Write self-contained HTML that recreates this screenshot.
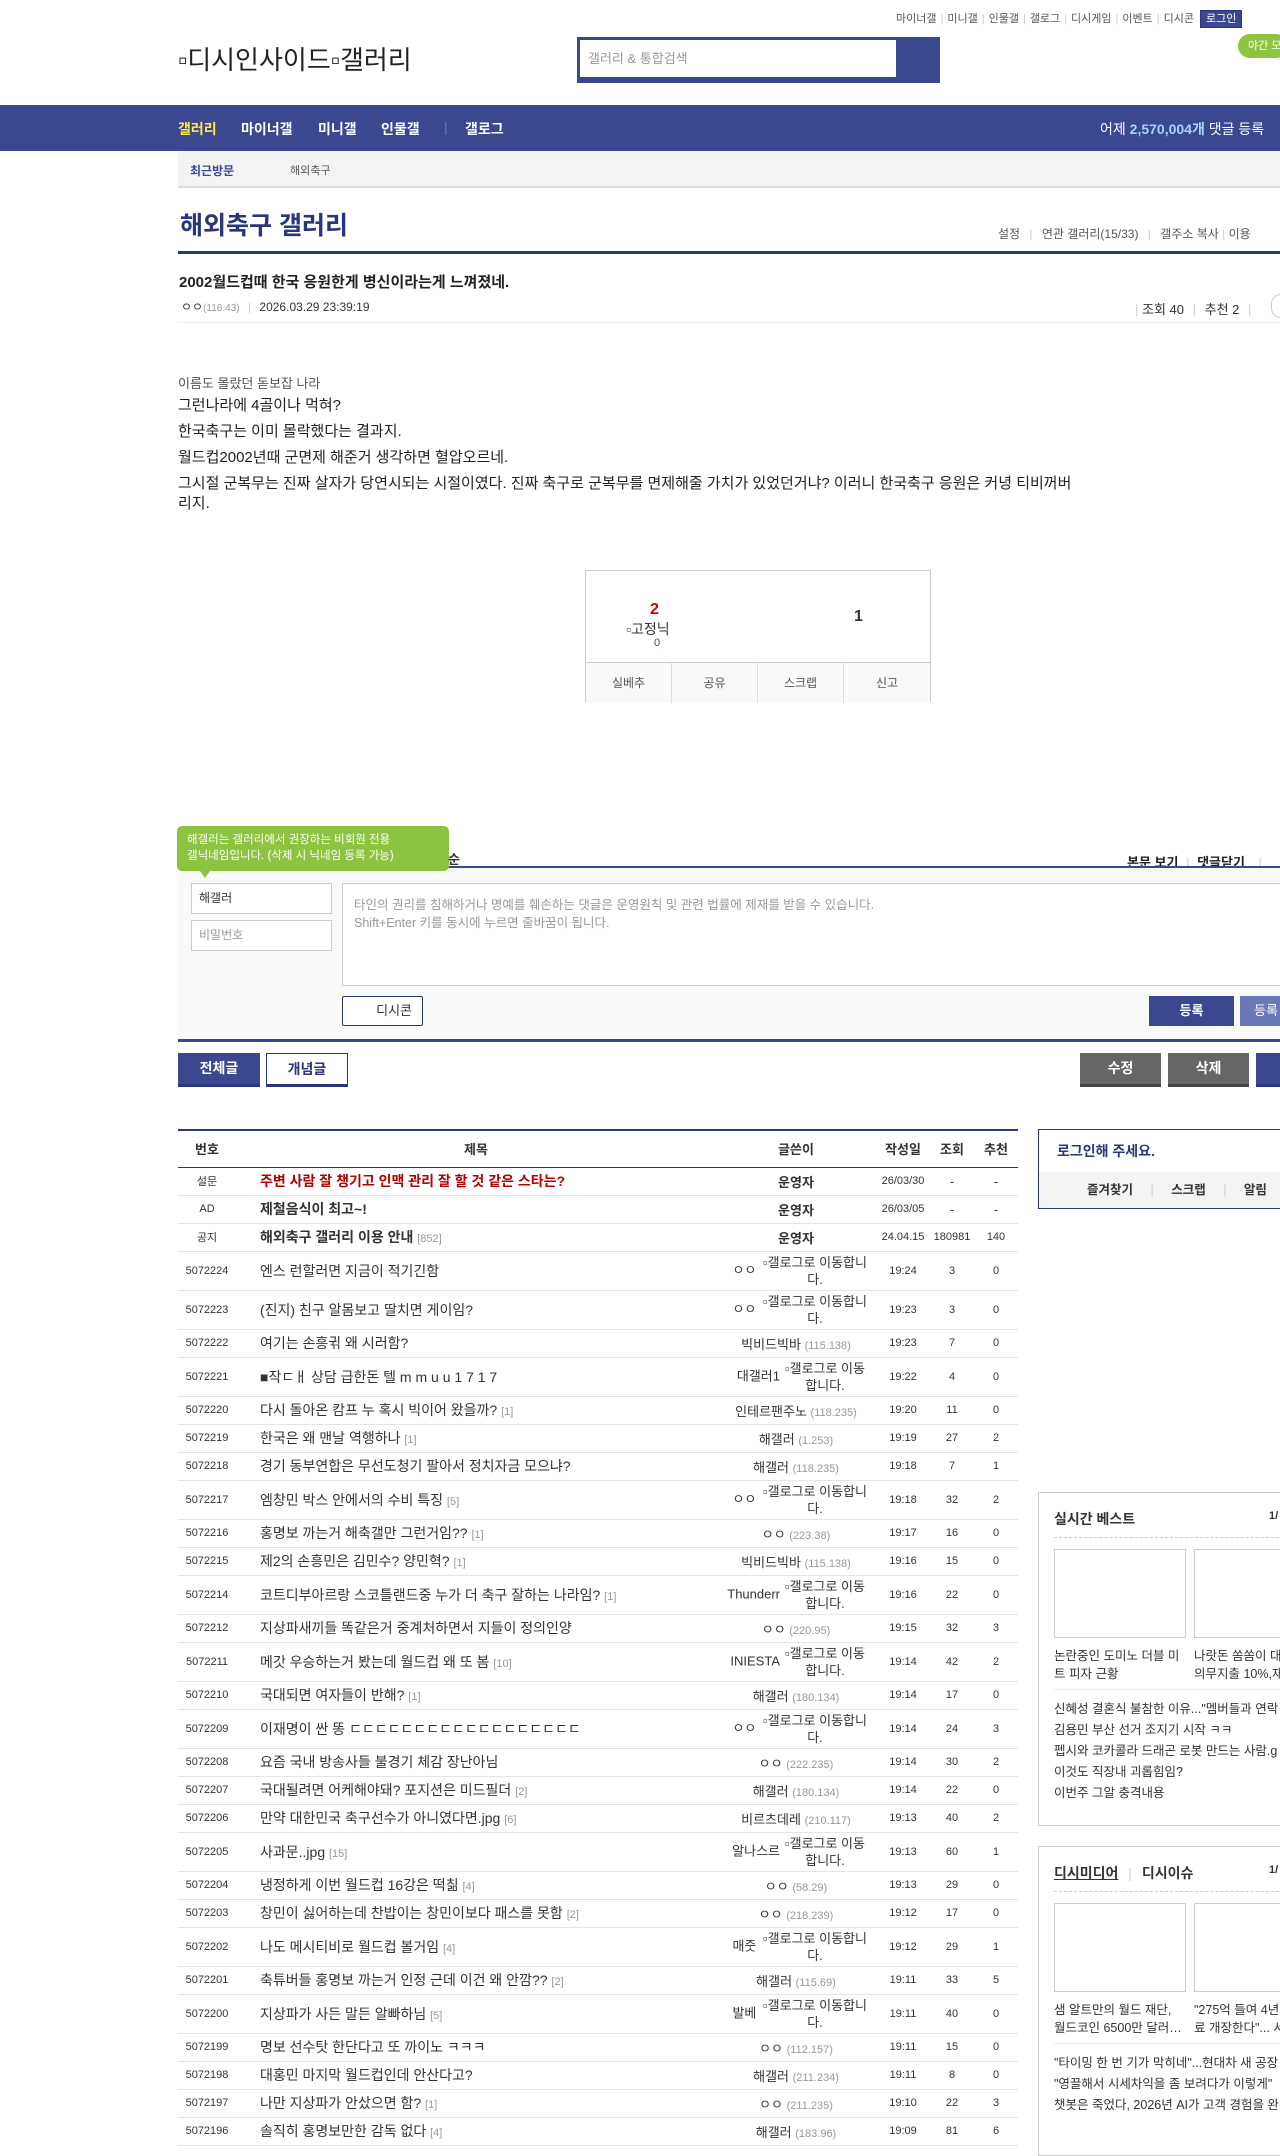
<!DOCTYPE html>
<html><head><meta charset="utf-8">
<style>
*{margin:0;padding:0;box-sizing:border-box}
body{width:1280px;height:2138px;overflow:hidden;background:#fff;font-family:"Liberation Sans","Noto Sans CJK KR",sans-serif;font-size:12px;color:#333;position:relative}
.a{position:absolute}
a{color:inherit;text-decoration:none}
.toplinks{top:10px;left:896px;font-size:11px;color:#555;white-space:nowrap}
.toplinks span.sep{color:#ccc;margin:0 4px}
.login{background:#3b4890;color:#fff;padding:2px 5px;border:1px solid #29367a;margin-left:6px}
.nav{top:105px;left:0;width:1280px;height:46px;background:#3b4890}
.nav .m{position:absolute;top:14px;font-size:14px;font-weight:bold;color:#fff}
.sub{top:151px;left:178px;width:1102px;height:37px;background:#f3f3f3;border-bottom:2px solid #ddd}
table{border-collapse:collapse}
.lst{position:absolute;top:1129px;left:178px;width:840px;border-top:2px solid #29367a;font-size:13px}
.lst td,.lst th{border-bottom:1px solid #e5e5e5;text-align:center;padding:0;color:#333}
.lst th{height:37px;font-weight:bold;border-bottom:1px solid #29367a;font-size:13px}
.lst td{height:28px}
.lst tr.d td{height:39px}
.lst td.t{text-align:left;padding-left:24px;font-size:14px}
.lst td.n{font-size:11px}
.lst .ip{color:#999;font-size:11px}
.lst .c{color:#999;font-size:11px}
.im{display:inline-block;width:110px;line-height:17px;text-align:center;vertical-align:middle}
.w{text-align:right!important;padding-right:6px!important}
.box{border:1px solid #ccc}
.btn{position:absolute;height:34px;line-height:30px;text-align:center;font-size:14px;font-weight:bold}
</style></head><body>

<div class="a toplinks">마이너갤<span class="sep">|</span>미니갤<span class="sep">|</span>인물갤<span class="sep">|</span>갤로그<span class="sep">|</span>디시게임<span class="sep">|</span>이벤트<span class="sep">|</span>디시콘<span class="login">로그인</span></div>
<div class="a" style="top:34px;left:1238px;width:50px;height:24px;background:#8dc43f;border-radius:12px;color:#fff;font-size:11px;line-height:24px;padding-left:10px">야간 모</div>
<div class="a" style="top:40px;left:178px;font-size:26px;color:#222">▫디시인사이드▫갤러리</div>
<div class="a" style="top:37px;left:577px;width:363px;height:46px;background:#3b4890;padding:3px 0 0 3px"><div style="width:316px;height:37px;background:#fff;color:#999;font-size:13px;line-height:37px;padding-left:8px">갤러리 &amp; 통합검색</div></div>

<div class="a nav">
<span class="m" style="left:178px;color:#ffeb3b">갤러리</span>
<span class="m" style="left:241px">마이너갤</span>
<span class="m" style="left:318px">미니갤</span>
<span class="m" style="left:381px">인물갤</span>
<span class="m" style="left:444px;color:#6b78b8;font-weight:normal">|</span>
<span class="m" style="left:465px">갤로그</span>
<span class="m" style="left:1100px;font-weight:normal;font-size:14px">어제 <b style="color:#a8d4ff">2,570,004개</b> 댓글 등록</span>
</div>
<div class="a sub"><span class="a" style="left:12px;top:11px;font-weight:bold;color:#3b4890;font-size:12px">최근방문</span><span class="a" style="left:112px;top:11px;color:#555;font-size:11px">해외축구</span></div>

<div class="a" style="top:206px;left:180px;font-size:25px;font-weight:bold;color:#29367a">해외축구 갤러리</div>
<div class="a" style="top:225px;left:998px;font-size:12px;color:#555;white-space:nowrap">설정 <span style="color:#ccc;margin:0 6px">|</span> 연관 갤러리(15/33) <span style="color:#ccc;margin:0 6px">|</span> 갤주소 복사 <span style="color:#ccc">|</span> 이용</div>
<div class="a" style="top:251px;left:178px;width:1102px;height:3px;background:#29367a"></div>

<div class="a" style="top:271px;left:179px;font-size:15px;font-weight:bold;color:#222">2002월드컵때 한국 응원한게 병신이라는게 느껴졌네.</div>
<div class="a" style="top:298px;left:181px;font-size:12px;color:#333">ㅇㅇ<span style="color:#999;font-size:10px">(116.43)</span> <span style="color:#ccc;margin:0 5px">|</span> 2026.03.29 23:39:19</div>
<div class="a" style="top:299px;left:1135px;font-size:13px;color:#333;white-space:nowrap"><span style="color:#ccc">|</span> 조회 40 <span style="color:#ccc;margin:0 5px">|</span> 추천 2 <span style="color:#ccc;margin:0 5px">|</span></div>
<div class="a" style="top:294px;left:1271px;width:20px;height:24px;border:1px solid #ccc;border-radius:12px"></div>
<div class="a" style="top:322px;left:178px;width:1102px;height:1px;background:#eee"></div>

<div class="a" style="top:375px;left:178px;font-size:15px;color:#222;line-height:26px;width:905px">
<div style="color:#555;font-size:13px;line-height:18px">이름도 몰랐던 돋보잡 나라</div>
그런나라에 4골이나 먹혀?<br>한국축구는 이미 몰락했다는 결과지.<br>월드컵2002년때 군면제 해준거 생각하면 혈압오르네.<br><div style="line-height:20px;margin-top:3px">그시절 군복무는 진짜 살자가 당연시되는 시절이였다. 진짜 축구로 군복무를 면제해줄 가치가 있었던거냐? 이러니 한국축구 응원은 커녕 티비꺼버리지.</div></div>

<div class="a box" style="top:570px;left:585px;width:346px;height:132px;border-color:#ccc">
<div class="a" style="left:64px;top:30px;color:#c00;font-weight:bold;font-size:16px">2</div>
<div class="a" style="left:40px;top:48px;font-size:14px">▫고정닉</div>
<div class="a" style="left:68px;top:66px;color:#3b4890;font-size:11px">0</div>
<div class="a" style="left:268px;top:37px;font-weight:bold;font-size:16px">1</div>
<div class="a" style="left:0;top:91px;width:344px;height:40px;border-top:1px solid #ccc;background:#f9f9f9;font-size:12px;color:#555">
<span class="a" style="left:0;width:86px;text-align:center;border-right:1px solid #ddd;height:40px;top:0;line-height:40px">실베추</span>
<span class="a" style="left:86px;width:86px;top:0;line-height:40px;text-align:center;border-right:1px solid #ddd;height:40px">공유</span>
<span class="a" style="left:172px;width:86px;top:0;line-height:40px;text-align:center;border-right:1px solid #ddd;height:40px">스크랩</span>
<span class="a" style="left:258px;width:86px;top:0;line-height:40px;text-align:center">신고</span>
</div></div>

<div class="a" style="top:852px;left:1127px;font-size:13px;font-weight:bold;color:#222;white-space:nowrap">본문 보기 <span style="color:#ccc;font-weight:normal;margin:0 4px">|</span> 댓글닫기 <span style="color:#ccc;font-weight:normal;margin-left:10px">|</span></div>
<div class="a" style="top:866px;left:178px;width:1102px;height:2px;background:#3b4890"></div>
<div class="a" style="top:868px;left:178px;width:1102px;height:171px;background:#f9f9f9"></div>
<div class="a" style="top:826px;left:177px;width:272px;height:45px;background:#8dc43f;border-radius:5px;color:#fff;font-size:11.5px;line-height:16px;padding:6px 10px">해갤러는 갤러리에서 권장하는 비회원 전용<br>갤닉네임입니다. (삭제 시 닉네임 등록 가능)</div>
<div class="a" style="top:871px;left:200px;border-left:5px solid transparent;border-right:5px solid transparent;border-top:7px solid #8dc43f"></div>
<div class="a" style="top:849px;left:448px;font-size:13px;font-weight:bold">순</div>
<div class="a" style="top:883px;left:191px;width:141px;height:31px;background:#fff;border:1px solid #ccc;font-size:12px;color:#333;line-height:29px;padding-left:7px">해갤러</div>
<div class="a" style="top:920px;left:191px;width:141px;height:31px;background:#fff;border:1px solid #ccc;font-size:12px;color:#999;line-height:29px;padding-left:7px">비밀번호</div>
<div class="a" style="top:883px;left:342px;width:940px;height:103px;background:#fff;border:1px solid #ccc;font-size:12.5px;color:#999;line-height:18px;padding:12px 11px">타인의 권리를 침해하거나 명예를 훼손하는 댓글은 운영원칙 및 관련 법률에 제재를 받을 수 있습니다.<br>Shift+Enter 키를 동시에 누르면 줄바꿈이 됩니다.</div>
<div class="a" style="top:996px;left:342px;width:81px;height:30px;background:#fff;border:1px solid #29367a;border-radius:2px;font-size:13px;line-height:28px;text-align:right;padding-right:10px">디시콘</div>
<div class="a" style="top:996px;left:1149px;width:85px;height:30px;background:#3b4890;color:#fff;font-size:13px;font-weight:bold;line-height:30px;text-align:center">등록</div>
<div class="a" style="top:996px;left:1240px;width:60px;height:30px;background:#6b78b8;color:#fff;font-size:13px;line-height:30px;padding-left:14px">등록</div>
<div class="a" style="top:1039px;left:178px;width:1102px;height:3px;background:#3b4890"></div>

<div class="btn" style="top:1053px;left:178px;width:82px;background:#3b4890;color:#fff;border-bottom:3px solid #29367a">전체글</div>
<div class="btn" style="top:1053px;left:266px;width:82px;background:#fff;color:#29367a;border:1px solid #29367a;border-bottom:3px solid #29367a">개념글</div>
<div class="btn" style="top:1053px;left:1080px;width:81px;background:#666;color:#fff;border-bottom:3px solid #444">수정</div>
<div class="btn" style="top:1053px;left:1168px;width:81px;background:#666;color:#fff;border-bottom:3px solid #444">삭제</div>
<div class="btn" style="top:1053px;left:1256px;width:40px;background:#3b4890;color:#fff;border-bottom:3px solid #29367a"></div>

<table class="lst">
<tr><th style="width:58px">번호</th><th>제목</th><th style="width:160px">글쓴이</th><th style="width:54px">작성일</th><th style="width:44px">조회</th><th style="width:44px">추천</th></tr>
<tr><td class="n">설문</td><td class="t" style="font-weight:bold;color:#b30000">주변 사람 잘 챙기고 인맥 관리 잘 할 것 같은 스타는?</td><td><b>운영자</b></td><td class="n">26/03/30</td><td>-</td><td>-</td></tr>
<tr><td class="n">AD</td><td class="t"><b>제철음식이 최고~!</b></td><td><b>운영자</b></td><td class="n">26/03/05</td><td>-</td><td>-</td></tr>
<tr><td class="n">공지</td><td class="t"><b>해외축구 갤러리 이용 안내</b> <span class="c">[852]</span></td><td><b>운영자</b></td><td class="n">24.04.15</td><td class="n">180981</td><td class="n">140</td></tr>
<tr class="d"><td class="n">5072224</td><td class="t">엔스 런할러면 지금이 적기긴함</td><td class="w">ㅇㅇ <span class="im">▫갤로그로 이동합니다.</span></td><td class="n">19:24</td><td class="n">3</td><td class="n">0</td></tr>
<tr class="d"><td class="n">5072223</td><td class="t">(진지) 친구 알몸보고 딸치면 게이임?</td><td class="w">ㅇㅇ <span class="im">▫갤로그로 이동합니다.</span></td><td class="n">19:23</td><td class="n">3</td><td class="n">0</td></tr>
<tr><td class="n">5072222</td><td class="t">여기는 손흥귂 왜 시러함?</td><td>빅비드빅바 <span class="ip">(115.138)</span></td><td class="n">19:23</td><td class="n">7</td><td class="n">0</td></tr>
<tr class="d"><td class="n">5072221</td><td class="t">■작ㄷㅐ 상담 급한돈 텔 m m u u 1 7 1 7</td><td class="w">대갤러1<span class="im" style="width:90px">▫갤로그로 이동합니다.</span></td><td class="n">19:22</td><td class="n">4</td><td class="n">0</td></tr>
<tr><td class="n">5072220</td><td class="t">다시 돌아온 캄프 누 혹시 빅이어 왔을까? <span class="c">[1]</span></td><td>인테르팬주노 <span class="ip">(118.235)</span></td><td class="n">19:20</td><td class="n">11</td><td class="n">0</td></tr>
<tr><td class="n">5072219</td><td class="t">한국은 왜 맨날 역행하나 <span class="c">[1]</span></td><td>해갤러 <span class="ip">(1.253)</span></td><td class="n">19:19</td><td class="n">27</td><td class="n">2</td></tr>
<tr><td class="n">5072218</td><td class="t">경기 동부연합은 무선도청기 팔아서 정치자금 모으냐?</td><td>해갤러 <span class="ip">(118.235)</span></td><td class="n">19:18</td><td class="n">7</td><td class="n">1</td></tr>
<tr class="d"><td class="n">5072217</td><td class="t">엠창민 박스 안에서의 수비 특징 <span class="c">[5]</span></td><td class="w">ㅇㅇ <span class="im">▫갤로그로 이동합니다.</span></td><td class="n">19:18</td><td class="n">32</td><td class="n">2</td></tr>
<tr><td class="n">5072216</td><td class="t">홍명보 까는거 해축갤만 그런거임?? <span class="c">[1]</span></td><td>ㅇㅇ <span class="ip">(223.38)</span></td><td class="n">19:17</td><td class="n">16</td><td class="n">0</td></tr>
<tr><td class="n">5072215</td><td class="t">제2의 손흥민은 김민수? 양민혁? <span class="c">[1]</span></td><td>빅비드빅바 <span class="ip">(115.138)</span></td><td class="n">19:16</td><td class="n">15</td><td class="n">0</td></tr>
<tr class="d"><td class="n">5072214</td><td class="t">코트디부아르랑 스코틀랜드중 누가 더 축구 잘하는 나라임? <span class="c">[1]</span></td><td class="w">Thunderr<span class="im" style="width:90px">▫갤로그로 이동합니다.</span></td><td class="n">19:16</td><td class="n">22</td><td class="n">0</td></tr>
<tr><td class="n">5072212</td><td class="t">지상파새끼들 똑같은거 중계처하면서 지들이 정의인양</td><td>ㅇㅇ <span class="ip">(220.95)</span></td><td class="n">19:15</td><td class="n">32</td><td class="n">3</td></tr>
<tr class="d"><td class="n">5072211</td><td class="t">메갓 우승하는거 봤는데 월드컵 왜 또 봄 <span class="c">[10]</span></td><td class="w">INIESTA<span class="im" style="width:90px">▫갤로그로 이동합니다.</span></td><td class="n">19:14</td><td class="n">42</td><td class="n">2</td></tr>
<tr><td class="n">5072210</td><td class="t">국대되면 여자들이 반해? <span class="c">[1]</span></td><td>해갤러 <span class="ip">(180.134)</span></td><td class="n">19:14</td><td class="n">17</td><td class="n">0</td></tr>
<tr class="d"><td class="n">5072209</td><td class="t">이재명이 싼 똥 ㄷㄷㄷㄷㄷㄷㄷㄷㄷㄷㄷㄷㄷㄷㄷㄷㄷㄷ</td><td class="w">ㅇㅇ <span class="im">▫갤로그로 이동합니다.</span></td><td class="n">19:14</td><td class="n">24</td><td class="n">3</td></tr>
<tr><td class="n">5072208</td><td class="t">요즘 국내 방송사들 불경기 체감 장난아님</td><td>ㅇㅇ <span class="ip">(222.235)</span></td><td class="n">19:14</td><td class="n">30</td><td class="n">2</td></tr>
<tr><td class="n">5072207</td><td class="t">국대될려면 어케해야돼? 포지션은 미드필더 <span class="c">[2]</span></td><td>해갤러 <span class="ip">(180.134)</span></td><td class="n">19:14</td><td class="n">22</td><td class="n">0</td></tr>
<tr><td class="n">5072206</td><td class="t">만약 대한민국 축구선수가 아니였다면.jpg <span class="c">[6]</span></td><td>비르츠데레 <span class="ip">(210.117)</span></td><td class="n">19:13</td><td class="n">40</td><td class="n">2</td></tr>
<tr class="d"><td class="n">5072205</td><td class="t">사과문..jpg <span class="c">[15]</span></td><td class="w">알나스르<span class="im" style="width:90px">▫갤로그로 이동합니다.</span></td><td class="n">19:13</td><td class="n">60</td><td class="n">1</td></tr>
<tr><td class="n">5072204</td><td class="t">냉정하게 이번 월드컵 16강은 떡칢 <span class="c">[4]</span></td><td>ㅇㅇ <span class="ip">(58.29)</span></td><td class="n">19:13</td><td class="n">29</td><td class="n">0</td></tr>
<tr><td class="n">5072203</td><td class="t">창민이 싫어하는데 찬밥이는 창민이보다 패스를 못함 <span class="c">[2]</span></td><td>ㅇㅇ <span class="ip">(218.239)</span></td><td class="n">19:12</td><td class="n">17</td><td class="n">0</td></tr>
<tr class="d"><td class="n">5072202</td><td class="t">나도 메시티비로 월드컵 볼거임 <span class="c">[4]</span></td><td class="w">매줏 <span class="im">▫갤로그로 이동합니다.</span></td><td class="n">19:12</td><td class="n">29</td><td class="n">1</td></tr>
<tr><td class="n">5072201</td><td class="t">축튜버들 홍명보 까는거 인정 근데 이건 왜 안깜?? <span class="c">[2]</span></td><td>해갤러 <span class="ip">(115.69)</span></td><td class="n">19:11</td><td class="n">33</td><td class="n">5</td></tr>
<tr class="d"><td class="n">5072200</td><td class="t">지상파가 사든 말든 알빠하님 <span class="c">[5]</span></td><td class="w">발베 <span class="im">▫갤로그로 이동합니다.</span></td><td class="n">19:11</td><td class="n">40</td><td class="n">0</td></tr>
<tr><td class="n">5072199</td><td class="t">명보 선수탓 한단다고 또 까이노 ㅋㅋㅋ</td><td>ㅇㅇ <span class="ip">(112.157)</span></td><td class="n">19:11</td><td class="n">15</td><td class="n">0</td></tr>
<tr><td class="n">5072198</td><td class="t">대홍민 마지막 월드컵인데 안산다고?</td><td>해갤러 <span class="ip">(211.234)</span></td><td class="n">19:11</td><td class="n">8</td><td class="n">0</td></tr>
<tr><td class="n">5072197</td><td class="t">나만 지상파가 안샀으면 함? <span class="c">[1]</span></td><td>ㅇㅇ <span class="ip">(211.235)</span></td><td class="n">19:10</td><td class="n">22</td><td class="n">3</td></tr>
<tr><td class="n">5072196</td><td class="t">솔직히 홍명보만한 감독 없다 <span class="c">[4]</span></td><td>해갤러 <span class="ip">(183.96)</span></td><td class="n">19:09</td><td class="n">81</td><td class="n">6</td></tr>
</table>

<div class="a" style="top:1129px;left:1038px;width:250px;height:80px;border:1px solid #29367a">
<div style="height:42px;line-height:42px;padding-left:18px;font-size:14px;font-weight:bold;color:#29367a">로그인해 주세요.</div>
<div style="height:36px;line-height:36px;background:#f3f3f3;font-size:12.5px;font-weight:bold;color:#333;padding-left:48px;white-space:nowrap">즐겨찾기 <span style="color:#ccc;font-weight:normal;margin:0 14px">|</span> 스크랩 <span style="color:#ccc;font-weight:normal;margin:0 14px">|</span> 알림</div>
</div>

<div class="a" style="top:1492px;left:1038px;width:250px;height:334px;border:1px solid #ccc;font-size:12.5px;color:#333">
<div class="a" style="left:15px;top:16px;font-size:14px;font-weight:bold">실시간 베스트</div>
<div class="a" style="left:230px;top:17px;font-size:11px;font-weight:bold">1/</div>
<div class="a" style="left:15px;top:44px;width:240px;border-top:1px dashed #ccc"></div>
<div class="a" style="left:15px;top:56px;width:132px;height:89px;border:1px solid #ccc"></div>
<div class="a" style="left:155px;top:56px;width:100px;height:89px;border:1px solid #ccc"></div>
<div class="a" style="left:15px;top:154px;width:132px;line-height:18px">논란중인 도미노 더블 미트 피자 근황</div>
<div class="a" style="left:155px;top:154px;width:110px;line-height:18px;white-space:nowrap;overflow:hidden">나랏돈 쏨쏨이 대<br>의무지출 10%,재</div>
<div class="a" style="left:15px;top:196px;width:240px;border-top:1px solid #eee"></div>
<div class="a" style="left:15px;top:206px;line-height:21px;white-space:nowrap">신혜성 결혼식 불참한 이유..."멤버들과 연락<br>김용민 부산 선거 조지기 시작 ㅋㅋ<br>펩시와 코카콜라 드래곤 로봇 만드는 사람.g<br>이것도 직장내 괴롭힘임?<br>이번주 그알 충격내용</div>
</div>

<div class="a" style="top:1846px;left:1038px;width:250px;height:310px;border:1px solid #ccc;font-size:12.5px;color:#333">
<div class="a" style="left:15px;top:16px;font-size:14px;font-weight:bold;white-space:nowrap"><u>디시미디어</u> <span style="color:#ccc;font-weight:normal;margin:0 6px">|</span> 디시이슈</div>
<div class="a" style="left:230px;top:17px;font-size:11px;font-weight:bold">1/</div>
<div class="a" style="left:15px;top:44px;width:240px;border-top:1px dashed #ccc"></div>
<div class="a" style="left:15px;top:56px;width:132px;height:89px;border:1px solid #ccc"></div>
<div class="a" style="left:155px;top:56px;width:100px;height:89px;border:1px solid #ccc"></div>
<div class="a" style="left:15px;top:154px;width:135px;line-height:18px;white-space:nowrap">샘 알트만의 월드 재단,<br>월드코인 6500만 달러…</div>
<div class="a" style="left:155px;top:154px;width:110px;line-height:18px;white-space:nowrap;overflow:hidden">"275억 들여 4년<br>료 개장한다"... 서</div>
<div class="a" style="left:15px;top:196px;width:240px;border-top:1px solid #eee"></div>
<div class="a" style="left:15px;top:206px;line-height:21px;white-space:nowrap">"타이밍 한 번 기가 막히네"...현대차 새 공장<br>"영끌해서 시세차익을 좀 보려다가 이렇게"<br>챗봇은 죽었다, 2026년 AI가 고객 경험을 완</div>
</div>

</body></html>
